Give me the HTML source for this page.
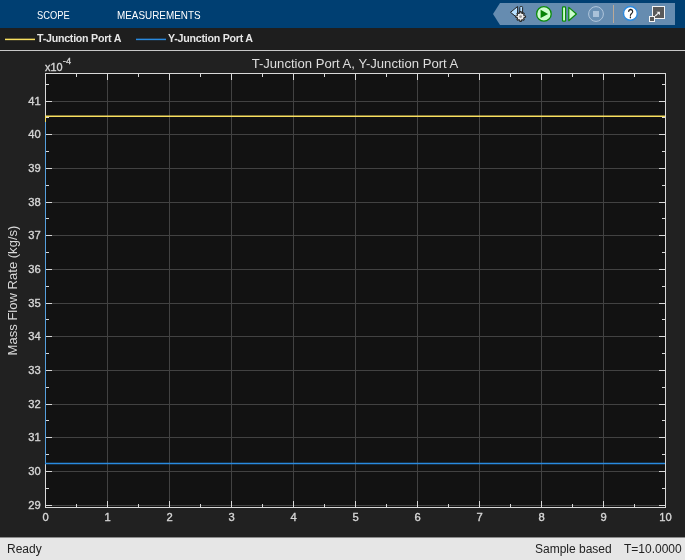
<!DOCTYPE html>
<html><head><meta charset="utf-8"><title>Scope</title>
<style>
html,body{margin:0;padding:0;}
body{width:685px;height:560px;overflow:hidden;background:#212121;font-family:"Liberation Sans",Arial,sans-serif;position:relative;}
#ts{will-change:transform;position:absolute;left:0;top:0;width:685px;height:28px;background:#003f72;}
#ts .tab{position:absolute;top:9px;font-size:11px;color:#ffffff;transform-origin:0 50%;white-space:nowrap;}
#leg{will-change:transform;position:absolute;left:0;top:28px;width:685px;height:22px;background:#1e1e1e;}
#leg .lb{position:absolute;top:4px;font-size:10.67px;letter-spacing:-0.25px;font-weight:bold;color:#e6e6e6;white-space:nowrap;}
#sep{position:absolute;left:0;top:50px;width:685px;height:1px;background:#c8c8c8;}
#status{will-change:transform;position:absolute;left:0;top:537px;width:685px;height:22px;border-top:1px solid #8c8c8c;background:#e6e6e6;color:#222;font-size:12px;}
#status span{position:absolute;top:4px;white-space:nowrap;}
svg text{font-family:"Liberation Sans",Arial,sans-serif;}
</style></head><body>
<div id="ts">
<span class="tab" style="left:36.7px;transform:scaleX(0.848)">SCOPE</span>
<span class="tab" style="left:117.3px;transform:scaleX(0.899)">MEASUREMENTS</span>
<svg width="685" height="28" viewBox="0 0 685 28" style="position:absolute;left:0;top:0">
<polygon points="493,14 500,3 675,3 675,25 500,25" fill="#668cb0"/>
<!-- config -->
<polygon points="510.5,12.3 517.6,6.5 517.6,18" fill="#b8e0ff" stroke="#222" stroke-width="1" stroke-linejoin="round"/>
<rect x="519.8" y="6.5" width="2.8" height="8" rx="0.9" fill="#b8e0ff" stroke="#222" stroke-width="1"/>
<path d="M525.56,15.97 L525.56,17.23 L524.10,17.44 L523.67,18.48 L524.31,19.48 L523.48,20.31 L522.48,19.67 L521.44,20.10 L521.23,21.56 L519.97,21.56 L519.76,20.10 L518.72,19.67 L517.72,20.31 L516.89,19.48 L517.53,18.48 L517.10,17.44 L515.64,17.23 L515.64,15.97 L517.10,15.76 L517.53,14.72 L516.89,13.72 L517.72,12.89 L518.72,13.53 L519.76,13.10 L519.97,11.64 L521.23,11.64 L521.44,13.10 L522.48,13.53 L523.48,12.89 L524.31,13.72 L523.67,14.72 L524.10,15.76Z" fill="#efefef" stroke="#262626" stroke-width="1.05" stroke-linejoin="round"/>
<circle cx="520.6" cy="16.6" r="1.4" fill="#979797"/>
<!-- play -->
<circle cx="543.9" cy="13.9" r="7.3" fill="#ccfccc" stroke="#0a8a0a" stroke-width="1.3"/>
<polygon points="540.6,9.8 548.1,13.9 540.6,18" fill="#078207"/>
<!-- step -->
<rect x="562.5" y="6.9" width="3.1" height="14.3" rx="0.8" fill="#ccfccc" stroke="#0a8a0a" stroke-width="1.2"/>
<polygon points="568.8,7.4 576.4,14 568.8,20.7" fill="#ccfccc" stroke="#0a8a0a" stroke-width="1.2" stroke-linejoin="round"/>
<!-- stop -->
<circle cx="596" cy="14" r="7.4" fill="#6a90b4" stroke="#b0c6dc" stroke-width="1"/>
<rect x="593" y="11" width="6" height="6" fill="#a9c1d9"/>
<!-- sep -->
<rect x="613" y="5" width="1" height="18" fill="#bba997"/>
<!-- help -->
<circle cx="630.4" cy="13.4" r="6.9" fill="#ffffff" stroke="#2a8ae0" stroke-width="1.4"/>
<text transform="translate(630.6,17.9) scale(0.82,1)" x="0" y="0" text-anchor="middle" font-size="12.5" stroke="#111" stroke-width="0.25" fill="#111" font-family="Liberation Sans, Arial, sans-serif">?</text>
<!-- restore -->
<rect x="652.5" y="6.5" width="12" height="12" fill="#595959" stroke="#f4f4f4" stroke-width="1"/>
<rect x="649.5" y="16.5" width="5" height="5" fill="#595959" stroke="#f4f4f4" stroke-width="1"/>
<path d="M655.2,16 L658.6,12.8" fill="none" stroke="#f0f0f0" stroke-width="1.1"/><polygon points="656.4,11.7 659.9,11.7 659.9,15.2 658.8,13.9 657.7,12.8" fill="#f4f4f4"/>
</svg>
</div>
<div id="leg">
<svg width="200" height="22" style="position:absolute;left:0;top:0"><line x1="5" y1="11.4" x2="35" y2="11.4" stroke="#f9e060" stroke-width="1.5"/><line x1="136" y1="11.4" x2="166" y2="11.4" stroke="#298ae0" stroke-width="1.5"/></svg>
<span class="lb" style="left:37px">T-Junction Port A</span>

<span class="lb" style="left:168px">Y-Junction Port A</span>
</div>
<div id="sep"></div>
<svg id="plot" width="685" height="486" viewBox="0 51 685 486" style="position:absolute;left:0;top:51px;will-change:transform">
<rect x="45" y="73" width="621" height="435" fill="#121212"/>
<g stroke="#424242" stroke-width="1" shape-rendering="crispEdges"><line x1="107.5" y1="73" x2="107.5" y2="507"/><line x1="169.5" y1="73" x2="169.5" y2="507"/><line x1="231.5" y1="73" x2="231.5" y2="507"/><line x1="293.5" y1="73" x2="293.5" y2="507"/><line x1="355.5" y1="73" x2="355.5" y2="507"/><line x1="417.5" y1="73" x2="417.5" y2="507"/><line x1="479.5" y1="73" x2="479.5" y2="507"/><line x1="541.5" y1="73" x2="541.5" y2="507"/><line x1="603.5" y1="73" x2="603.5" y2="507"/><line x1="45" y1="505.5" x2="665" y2="505.5"/><line x1="45" y1="471.5" x2="665" y2="471.5"/><line x1="45" y1="437.5" x2="665" y2="437.5"/><line x1="45" y1="404.5" x2="665" y2="404.5"/><line x1="45" y1="370.5" x2="665" y2="370.5"/><line x1="45" y1="336.5" x2="665" y2="336.5"/><line x1="45" y1="303.5" x2="665" y2="303.5"/><line x1="45" y1="269.5" x2="665" y2="269.5"/><line x1="45" y1="235.5" x2="665" y2="235.5"/><line x1="45" y1="202.5" x2="665" y2="202.5"/><line x1="45" y1="168.5" x2="665" y2="168.5"/><line x1="45" y1="134.5" x2="665" y2="134.5"/><line x1="45" y1="101.5" x2="665" y2="101.5"/></g>
<g stroke="#d9d9d9" stroke-width="1" shape-rendering="crispEdges"><line x1="45.5" y1="508" x2="45.5" y2="501"/><line x1="45.5" y1="73" x2="45.5" y2="80"/><line x1="76.5" y1="508" x2="76.5" y2="504"/><line x1="76.5" y1="73" x2="76.5" y2="77"/><line x1="107.5" y1="508" x2="107.5" y2="501"/><line x1="107.5" y1="73" x2="107.5" y2="80"/><line x1="138.5" y1="508" x2="138.5" y2="504"/><line x1="138.5" y1="73" x2="138.5" y2="77"/><line x1="169.5" y1="508" x2="169.5" y2="501"/><line x1="169.5" y1="73" x2="169.5" y2="80"/><line x1="200.5" y1="508" x2="200.5" y2="504"/><line x1="200.5" y1="73" x2="200.5" y2="77"/><line x1="231.5" y1="508" x2="231.5" y2="501"/><line x1="231.5" y1="73" x2="231.5" y2="80"/><line x1="262.5" y1="508" x2="262.5" y2="504"/><line x1="262.5" y1="73" x2="262.5" y2="77"/><line x1="293.5" y1="508" x2="293.5" y2="501"/><line x1="293.5" y1="73" x2="293.5" y2="80"/><line x1="324.5" y1="508" x2="324.5" y2="504"/><line x1="324.5" y1="73" x2="324.5" y2="77"/><line x1="355.5" y1="508" x2="355.5" y2="501"/><line x1="355.5" y1="73" x2="355.5" y2="80"/><line x1="386.5" y1="508" x2="386.5" y2="504"/><line x1="386.5" y1="73" x2="386.5" y2="77"/><line x1="417.5" y1="508" x2="417.5" y2="501"/><line x1="417.5" y1="73" x2="417.5" y2="80"/><line x1="448.5" y1="508" x2="448.5" y2="504"/><line x1="448.5" y1="73" x2="448.5" y2="77"/><line x1="479.5" y1="508" x2="479.5" y2="501"/><line x1="479.5" y1="73" x2="479.5" y2="80"/><line x1="510.5" y1="508" x2="510.5" y2="504"/><line x1="510.5" y1="73" x2="510.5" y2="77"/><line x1="541.5" y1="508" x2="541.5" y2="501"/><line x1="541.5" y1="73" x2="541.5" y2="80"/><line x1="572.5" y1="508" x2="572.5" y2="504"/><line x1="572.5" y1="73" x2="572.5" y2="77"/><line x1="603.5" y1="508" x2="603.5" y2="501"/><line x1="603.5" y1="73" x2="603.5" y2="80"/><line x1="634.5" y1="508" x2="634.5" y2="504"/><line x1="634.5" y1="73" x2="634.5" y2="77"/><line x1="665.5" y1="508" x2="665.5" y2="501"/><line x1="665.5" y1="73" x2="665.5" y2="80"/><line x1="45" y1="505.5" x2="52" y2="505.5"/><line x1="666" y1="505.5" x2="659" y2="505.5"/><line x1="45" y1="488.5" x2="49" y2="488.5"/><line x1="666" y1="488.5" x2="662" y2="488.5"/><line x1="45" y1="471.5" x2="52" y2="471.5"/><line x1="666" y1="471.5" x2="659" y2="471.5"/><line x1="45" y1="454.5" x2="49" y2="454.5"/><line x1="666" y1="454.5" x2="662" y2="454.5"/><line x1="45" y1="437.5" x2="52" y2="437.5"/><line x1="666" y1="437.5" x2="659" y2="437.5"/><line x1="45" y1="420.5" x2="49" y2="420.5"/><line x1="666" y1="420.5" x2="662" y2="420.5"/><line x1="45" y1="404.5" x2="52" y2="404.5"/><line x1="666" y1="404.5" x2="659" y2="404.5"/><line x1="45" y1="387.5" x2="49" y2="387.5"/><line x1="666" y1="387.5" x2="662" y2="387.5"/><line x1="45" y1="370.5" x2="52" y2="370.5"/><line x1="666" y1="370.5" x2="659" y2="370.5"/><line x1="45" y1="353.5" x2="49" y2="353.5"/><line x1="666" y1="353.5" x2="662" y2="353.5"/><line x1="45" y1="336.5" x2="52" y2="336.5"/><line x1="666" y1="336.5" x2="659" y2="336.5"/><line x1="45" y1="319.5" x2="49" y2="319.5"/><line x1="666" y1="319.5" x2="662" y2="319.5"/><line x1="45" y1="303.5" x2="52" y2="303.5"/><line x1="666" y1="303.5" x2="659" y2="303.5"/><line x1="45" y1="286.5" x2="49" y2="286.5"/><line x1="666" y1="286.5" x2="662" y2="286.5"/><line x1="45" y1="269.5" x2="52" y2="269.5"/><line x1="666" y1="269.5" x2="659" y2="269.5"/><line x1="45" y1="252.5" x2="49" y2="252.5"/><line x1="666" y1="252.5" x2="662" y2="252.5"/><line x1="45" y1="235.5" x2="52" y2="235.5"/><line x1="666" y1="235.5" x2="659" y2="235.5"/><line x1="45" y1="218.5" x2="49" y2="218.5"/><line x1="666" y1="218.5" x2="662" y2="218.5"/><line x1="45" y1="202.5" x2="52" y2="202.5"/><line x1="666" y1="202.5" x2="659" y2="202.5"/><line x1="45" y1="185.5" x2="49" y2="185.5"/><line x1="666" y1="185.5" x2="662" y2="185.5"/><line x1="45" y1="168.5" x2="52" y2="168.5"/><line x1="666" y1="168.5" x2="659" y2="168.5"/><line x1="45" y1="151.5" x2="49" y2="151.5"/><line x1="666" y1="151.5" x2="662" y2="151.5"/><line x1="45" y1="134.5" x2="52" y2="134.5"/><line x1="666" y1="134.5" x2="659" y2="134.5"/><line x1="45" y1="117.5" x2="49" y2="117.5"/><line x1="666" y1="117.5" x2="662" y2="117.5"/><line x1="45" y1="101.5" x2="52" y2="101.5"/><line x1="666" y1="101.5" x2="659" y2="101.5"/><line x1="45" y1="84.5" x2="49" y2="84.5"/><line x1="666" y1="84.5" x2="662" y2="84.5"/></g>
<rect x="45.5" y="73.5" width="620" height="434" fill="none" stroke="#d9d9d9" stroke-width="1" shape-rendering="crispEdges"/>
<g shape-rendering="crispEdges"><line x1="45.5" y1="116" x2="45.5" y2="122" stroke="#f2d85a" stroke-width="1"/>
<line x1="45.5" y1="122" x2="45.5" y2="464" stroke="#559fdc" stroke-width="1"/></g>
<line x1="45" y1="116.3" x2="665" y2="116.3" stroke="#f9e060" stroke-width="1.5"/>
<line x1="45" y1="463.4" x2="665" y2="463.4" stroke="#298ae0" stroke-width="1.5"/>
<g fill="#d6d6d6" stroke="#d6d6d6" stroke-width="0.35" font-size="11.2"><text x="45.5" y="521" text-anchor="middle">0</text><text x="107.5" y="521" text-anchor="middle">1</text><text x="169.5" y="521" text-anchor="middle">2</text><text x="231.5" y="521" text-anchor="middle">3</text><text x="293.5" y="521" text-anchor="middle">4</text><text x="355.5" y="521" text-anchor="middle">5</text><text x="417.5" y="521" text-anchor="middle">6</text><text x="479.5" y="521" text-anchor="middle">7</text><text x="541.5" y="521" text-anchor="middle">8</text><text x="603.5" y="521" text-anchor="middle">9</text><text x="665.5" y="521" text-anchor="middle">10</text><text x="40.8" y="509" text-anchor="end">29</text><text x="40.8" y="475" text-anchor="end">30</text><text x="40.8" y="441" text-anchor="end">31</text><text x="40.8" y="408" text-anchor="end">32</text><text x="40.8" y="374" text-anchor="end">33</text><text x="40.8" y="340" text-anchor="end">34</text><text x="40.8" y="307" text-anchor="end">35</text><text x="40.8" y="273" text-anchor="end">36</text><text x="40.8" y="239" text-anchor="end">37</text><text x="40.8" y="206" text-anchor="end">38</text><text x="40.8" y="172" text-anchor="end">39</text><text x="40.8" y="138" text-anchor="end">40</text><text x="40.8" y="105" text-anchor="end">41</text></g>
<text x="355" y="68" text-anchor="middle" fill="#dedede" font-size="13.1">T-Junction Port A, Y-Junction Port A</text>
<text x="45" y="71" fill="#d6d6d6" stroke="#d6d6d6" stroke-width="0.35" font-size="10.9">x10<tspan dy="-7" dx="0.3" font-size="9.2">-4</tspan></text>
<text transform="translate(17.3,290.5) rotate(-90)" text-anchor="middle" fill="#d9d9d9" font-size="13.05">Mass Flow Rate (kg/s)</text>
</svg>
<div id="status"><span style="left:7px">Ready</span><span style="left:535px">Sample based</span><span style="left:624px">T=10.0000</span></div>
</body></html>
